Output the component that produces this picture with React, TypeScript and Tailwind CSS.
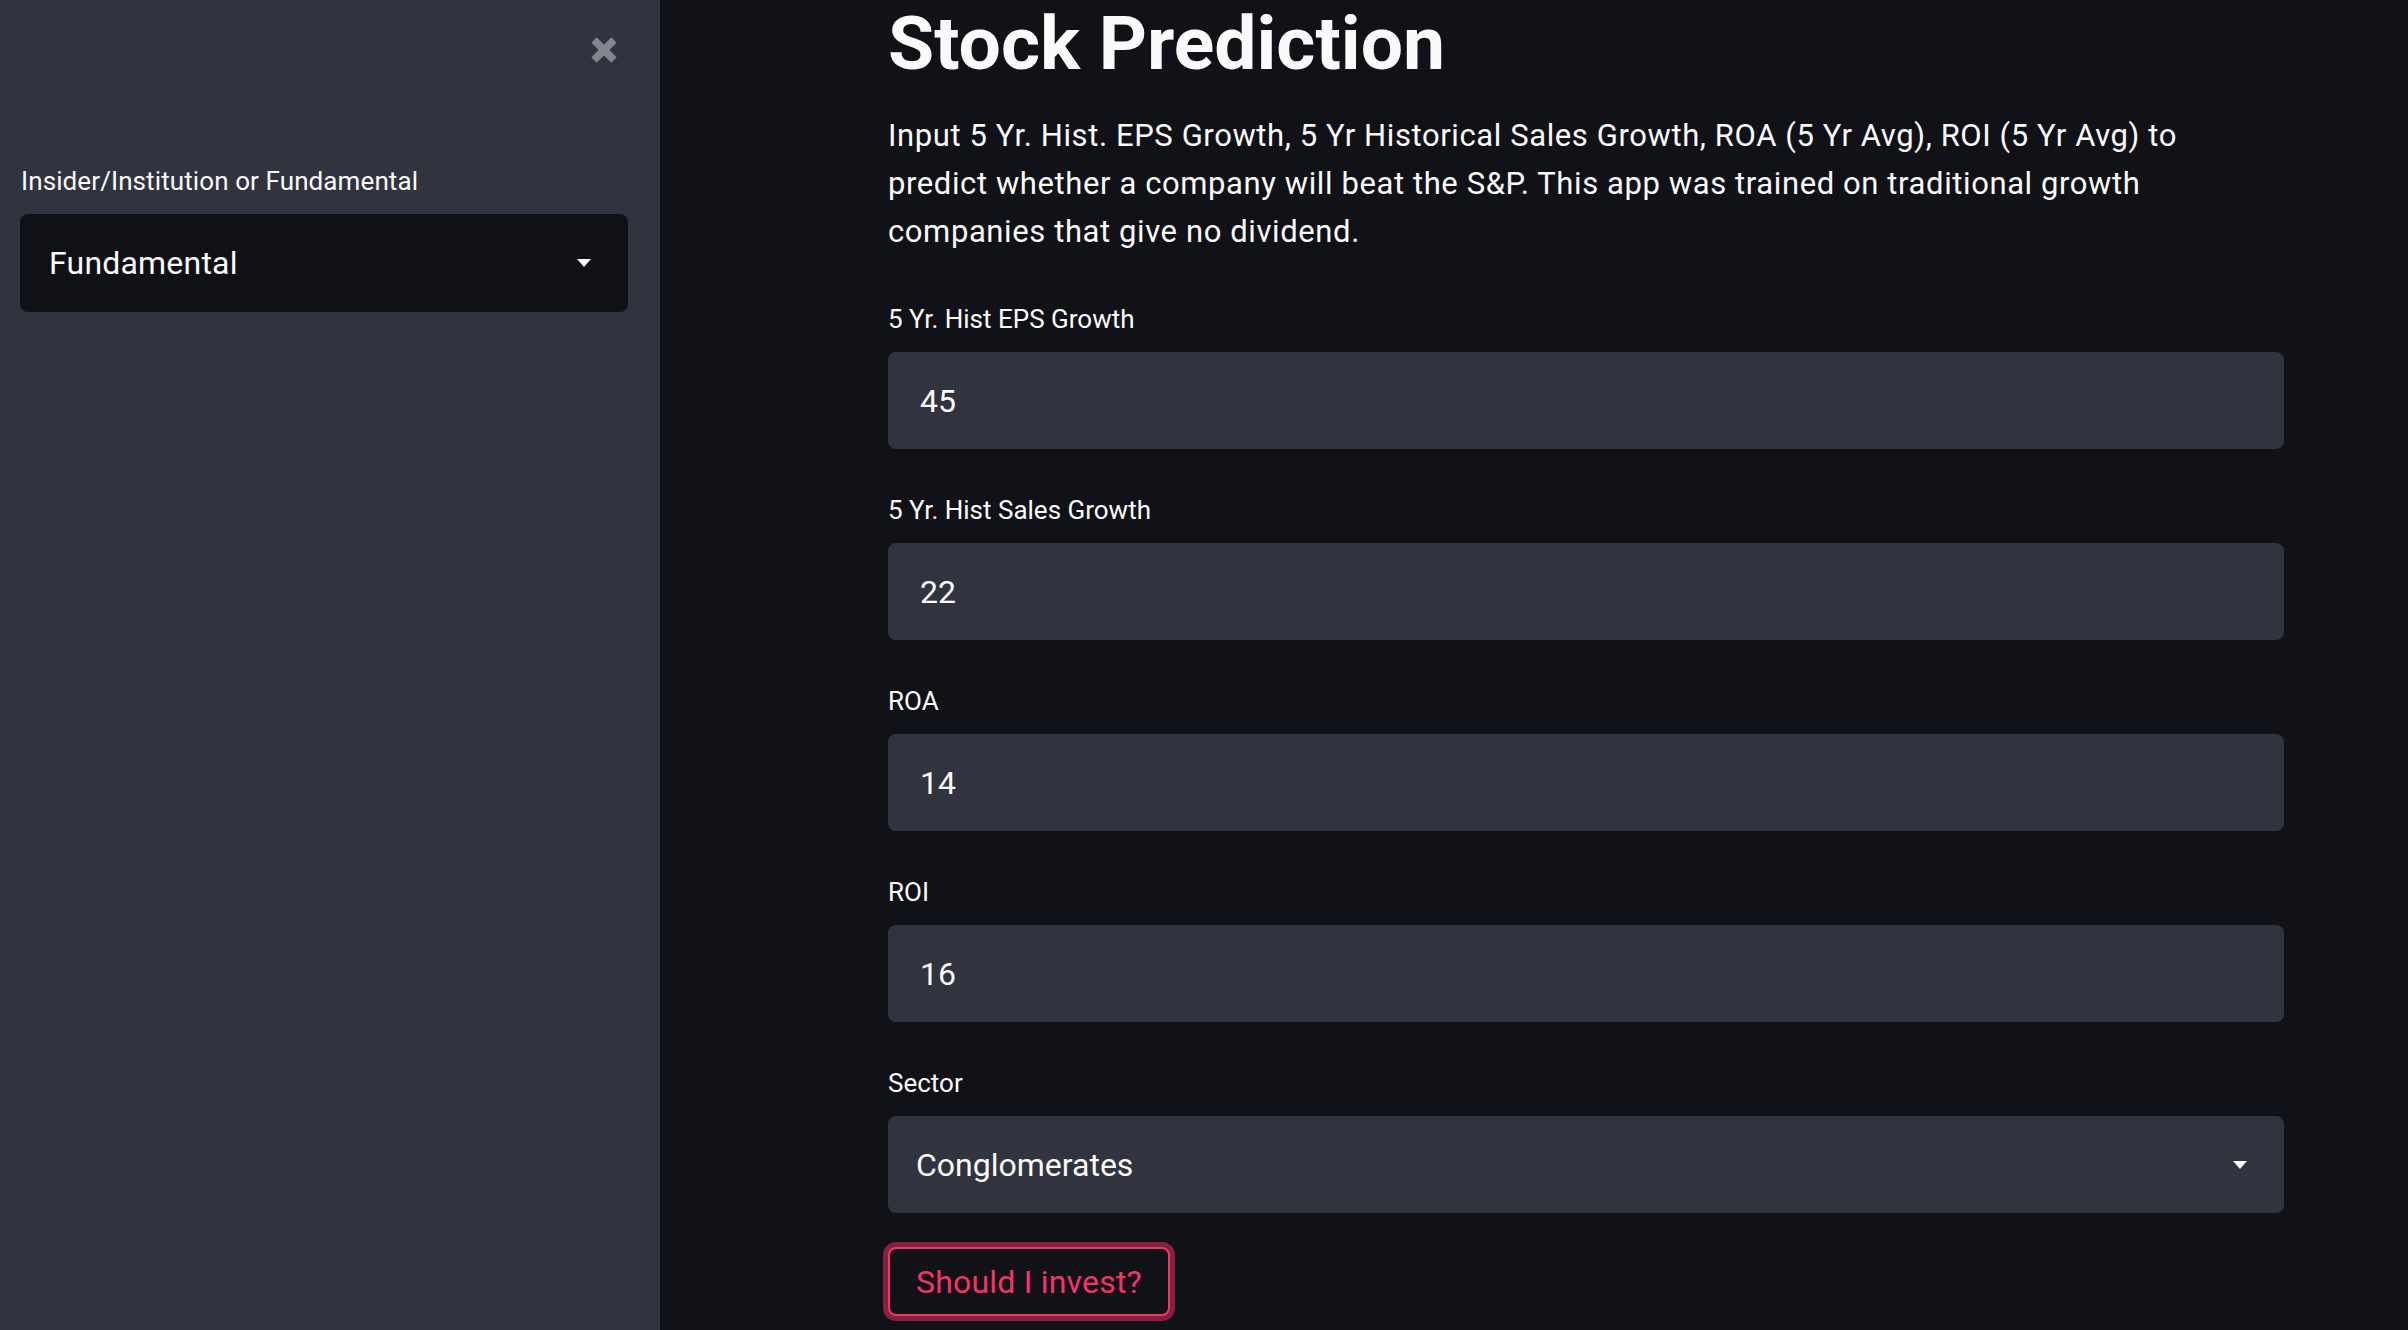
import { useState } from "react";

interface Field {
  label: string;
  value: string;
}

const fields: Field[] = [
  { label: "5 Yr. Hist EPS Growth", value: "45" },
  { label: "5 Yr. Hist Sales Growth", value: "22" },
  { label: "ROA", value: "14" },
  { label: "ROI", value: "16" },
];

function Caret() {
  return (
    <svg width="14" height="8" viewBox="0 0 14 8" className="shrink-0">
      <polygon points="0,0 14,0 7,8" fill="#fafafa" />
    </svg>
  );
}

function CloseIcon() {
  return (
    <svg width="28" height="28" viewBox="0 0 28 28">
      <path d="M4 4 L24 24 M24 4 L4 24" stroke="#83858f" strokeWidth="7.5" strokeLinecap="butt" />
    </svg>
  );
}

export default function App() {
  const [mode] = useState("Fundamental");
  const [values, setValues] = useState(fields.map((f) => f.value));

  return (
    <div className="flex h-[1330px] w-full overflow-hidden bg-[#111218] text-[#fafafa] font-['Roboto','Liberation_Sans',sans-serif]">
      <aside className="w-[660px] shrink-0 bg-[#31333f] px-[20px]">
        <div className="flex justify-end pt-[36px] pr-[22px]">
          <CloseIcon />
        </div>

        <div className="mt-[104px] pl-[1px] text-[26px] leading-[26px] tracking-[0.1px]">
          Insider/Institution or Fundamental
        </div>
        <div className="mt-[20px] flex h-[98px] w-[608px] items-center justify-between rounded-[8px] bg-[#101116] pl-[29px] pr-[37px]">
          <span className="text-[32px] tracking-[0.2px]">{mode}</span>
          <Caret />
        </div>
      </aside>

      <main className="flex-1 pl-[228px]">
        <div className="w-[1396px]">
          <h1 className="text-[75px] leading-[86px] font-bold">Stock Prediction</h1>

          <p className="mt-[26px] text-[31px] leading-[48px] tracking-[0.6px]">
            Input 5 Yr. Hist. EPS Growth, 5 Yr Historical Sales Growth, ROA (5 Yr Avg), ROI (5 Yr Avg) to
            <br />
            predict whether a company will beat the S&amp;P. This app was trained on traditional growth
            <br />
            companies that give no dividend.
          </p>

          <div className="mt-[50px] flex flex-col gap-[48px]">
            {fields.map((field, i) => (
              <div key={field.label}>
                <div className="text-[26px] leading-[26px]">{field.label}</div>
                <input
                  type="text"
                  value={values[i]}
                  onChange={(e) => {
                    const next = [...values];
                    next[i] = e.target.value;
                    setValues(next);
                  }}
                  className="mt-[20px] block h-[97px] w-full rounded-[8px] bg-[#31333f] px-[32px] text-[32px] text-[#fafafa] outline-none"
                />
              </div>
            ))}

            <div>
              <div className="text-[26px] leading-[26px]">Sector</div>
              <div className="mt-[20px] flex h-[97px] w-full items-center justify-between rounded-[8px] bg-[#31333f] pl-[28px] pr-[37px]">
                <span className="text-[32px]">Conglomerates</span>
                <Caret />
              </div>
            </div>
          </div>

          <button className="mt-[34px] h-[69px] rounded-[8px] border-2 border-[#f63366] bg-[#111218] px-[26px] text-[32px] tracking-[0.2px] text-[#f63366] shadow-[0_0_0_5px_#83223f]">
            Should I invest?
          </button>
        </div>
      </main>
    </div>
  );
}
